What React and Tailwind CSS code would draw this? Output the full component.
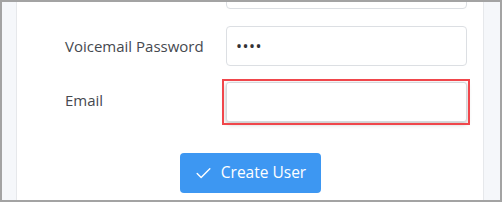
import { Check } from "lucide-react";

export default function App() {
  return (
    <div className="w-[502px] h-[202px] overflow-hidden border-2 border-[#a3a3a3] flex bg-white font-['Open_Sans','Noto_Sans',sans-serif]">
      {/* left gutter */}
      <div className="w-[15px] bg-[#f5f7fa] border-r border-[#e6e8eb]" />

      {/* form panel */}
      <div className="flex-1 bg-white pl-[48px] pr-[16px] flex flex-col">
        <div className="flex items-center -mt-[33px]">
          <div className="w-[161px]" />
          <div className="flex-1 h-[40px] border border-[#dcdfe3] rounded-[4px]" />
        </div>

        <div className="flex items-center mt-[17px]">
          <label className="w-[161px] text-[15px] text-[#45494f]">Voicemail Password</label>
          <div className="flex-1 h-[40px] border border-[#dcdfe3] rounded-[4px] flex items-center px-[9px] text-[#333] text-[16px] tracking-[0.5px]">
            ••••
          </div>
        </div>

        <div className="flex items-center mt-[16px]">
          <label className="w-[161px] text-[15px] text-[#45494f] -mt-[3px]">Email</label>
          <div className="flex-1 relative">
            <div className="h-[40px] border border-[#d6d8dc] rounded-[3px] shadow-[0_2px_5px_rgba(0,0,0,0.25)] bg-white" />
            <div className="absolute -left-[4px] -right-[3px] -top-[3px] -bottom-[3px] border-2 border-[#f0464b] pointer-events-none" />
          </div>
        </div>

        <div className="flex justify-center mt-[31px] -ml-[48px] -mr-[16px]">
          <button className="w-[141px] h-[40px] rounded-[4px] bg-[#3d97f2] text-white text-[15.5px] flex items-center justify-center gap-[8px]">
            <Check size={19} strokeWidth={1.8} />
            Create User
          </button>
        </div>
      </div>

      {/* right gutter */}
      <div className="w-[17px] bg-[#f5f7fa] border-l border-[#e6e8eb]" />
    </div>
  );
}
